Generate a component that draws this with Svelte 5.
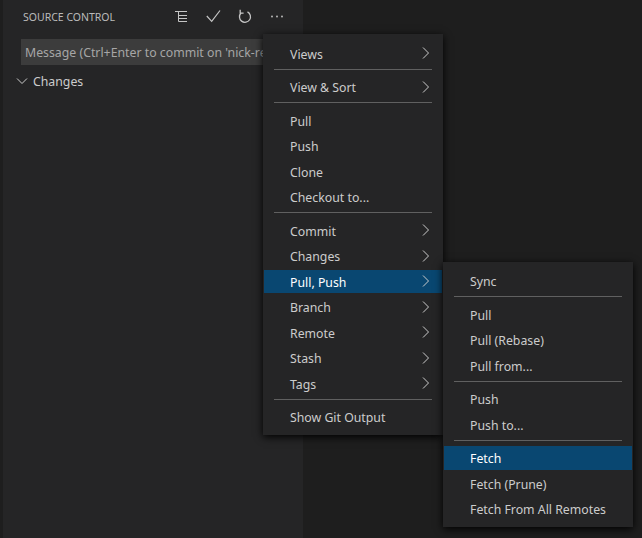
<script>
  const mainMenu = [
    [{ label: "Views", sub: true }],
    [{ label: "View & Sort", sub: true }],
    [{ label: "Pull" }, { label: "Push" }, { label: "Clone" }, { label: "Checkout to..." }],
    [
      { label: "Commit", sub: true },
      { label: "Changes", sub: true },
      { label: "Pull, Push", sub: true, active: true },
      { label: "Branch", sub: true },
      { label: "Remote", sub: true },
      { label: "Stash", sub: true },
      { label: "Tags", sub: true }
    ],
    [{ label: "Show Git Output" }]
  ];

  const pullPushMenu = [
    [{ label: "Sync" }],
    [{ label: "Pull" }, { label: "Pull (Rebase)" }, { label: "Pull from..." }],
    [{ label: "Push" }, { label: "Push to..." }],
    [{ label: "Fetch", active: true }, { label: "Fetch (Prune)" }, { label: "Fetch From All Remotes" }]
  ];
</script>

{#snippet menu(groups, cls)}
  <ul class="menu {cls}">
    {#each groups as group, i}
      {#if i > 0}
        <li class="separator"></li>
      {/if}
      {#each group as item}
        <li class="item" class:active={item.active}>
          <span>{item.label}</span>
          {#if item.sub}
            <svg class="chevron" width="16" height="16" viewBox="0 0 16 16">
              <path d="M6 2.5 L11.5 8 L6 13.5" fill="none" stroke="currentColor" stroke-width="1" />
            </svg>
          {/if}
        </li>
      {/each}
    {/each}
  </ul>
{/snippet}

<div class="workbench">
  <aside class="sidebar">
    <header class="title-bar">
      <h2>SOURCE CONTROL</h2>
      <div class="actions">
        <svg width="16" height="16" viewBox="0 0 16 16" fill="none" stroke="currentColor" stroke-width="1">
          <path d="M2 2.5H14M5.5 2.5V12.5H14M5.5 6.5H14M5.5 9.5H14" />
        </svg>
        <svg width="16" height="16" viewBox="0 0 16 16" fill="none" stroke="currentColor" stroke-width="1.2">
          <path d="M1.8 7L6.7 12.3L15 1.5" />
        </svg>
        <svg width="16" height="16" viewBox="0 0 16 16" fill="none" stroke="currentColor" stroke-width="1.3">
          <path d="M4 4A5.5 5.5 0 1 0 10.5 2.9M3.2 .8V4.2H6.6" />
        </svg>
        <svg width="16" height="16" viewBox="0 0 16 16" fill="currentColor">
          <circle cx="3" cy="7.5" r=".9" /><circle cx="8" cy="7.5" r=".9" /><circle cx="13" cy="7.5" r=".9" />
        </svg>
      </div>
    </header>
    <div class="commit-box">Message (Ctrl+Enter to commit on 'nick-re</div>
    <div class="section">
      <svg width="16" height="16" viewBox="0 0 16 16" fill="none" stroke="currentColor" stroke-width="1">
        <path d="M2 5.5L7 10.5L12 5.5" />
      </svg>
      <span>Changes</span>
    </div>
  </aside>
  <main class="editor"></main>
  {@render menu(mainMenu, "main-menu")}
  {@render menu(pullPushMenu, "sub-menu")}
</div>

<style>
  :global(body) {
    margin: 0;
    background: #1e1e1e;
  }

  .workbench {
    position: relative;
    display: flex;
    width: 642px;
    height: 538px;
    overflow: hidden;
    background: #1e1e1e;
    font-family: "Noto Sans", sans-serif;
    font-size: 12.3px;
    color: #cccccc;
  }

  .sidebar {
    width: 300px;
    margin-left: 3px;
    background: #252526;
    flex-shrink: 0;
  }

  .title-bar {
    display: flex;
    align-items: center;
    justify-content: space-between;
    height: 34px;
    padding-left: 20px;
  }

  h2 {
    margin: 0;
    font-size: 10.5px;
    font-weight: 400;
    color: #bbbbbb;
  }

  .actions {
    display: flex;
    gap: 16px;
    margin-right: 18px;
    color: #c5c5c5;
  }

  .commit-box {
    margin: 5px 0 0 18px;
    height: 26px;
    line-height: 27px;
    padding-left: 4px;
    background: #3c3c3c;
    color: #a6a6a6;
    white-space: nowrap;
    overflow: hidden;
  }

  .section {
    display: flex;
    align-items: center;
    gap: 2px;
    height: 22px;
    margin-top: 5px;
    padding-left: 12px;
  }

  .editor {
    flex: 1;
  }

  .menu {
    position: absolute;
    list-style: none;
    margin: 0;
    padding: 7.3px 1px 4px;
    box-sizing: border-box;
    background: #252526;
    box-shadow: 0 2px 8px #000000;
  }

  .main-menu {
    left: 263px;
    top: 34px;
    width: 180px;
    padding-top: 7.85px;
  }

  .sub-menu {
    left: 443px;
    top: 262px;
    width: 190px;
  }

  .item {
    display: flex;
    align-items: center;
    justify-content: space-between;
    height: 23.5px;
    margin-bottom: 2px;
    padding: 0 9px 0 26px;
    white-space: nowrap;
  }

  .item span {
    padding-top: 1px;
  }

  .item.active {
    background: #094771;
    color: #ffffff;
  }

  .chevron {
    margin-bottom: 1px;
    color: #cccccc;
  }

  .separator {
    height: 1px;
    margin: 3.5px 10px 5.5px;
    background: #606060;
  }
</style>
